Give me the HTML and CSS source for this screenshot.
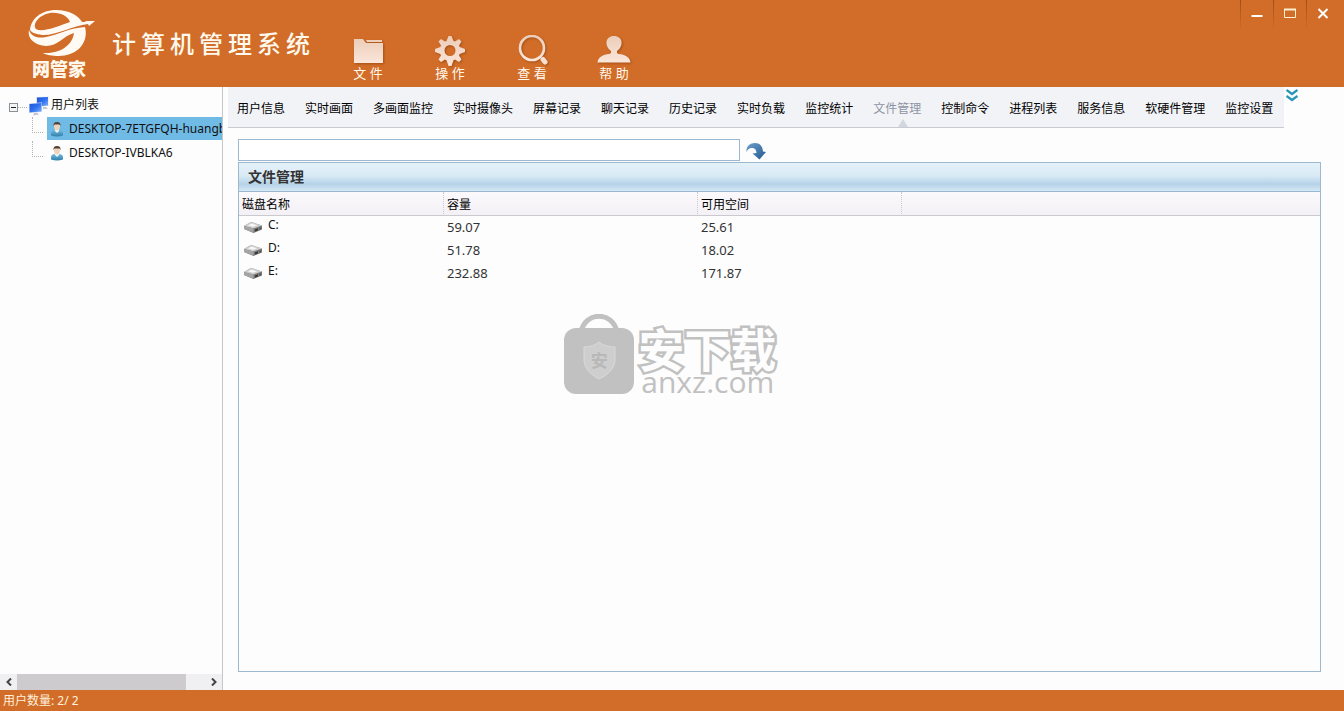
FILE: index.html
```html
<!DOCTYPE html>
<html lang="zh-CN">
<head>
<meta charset="utf-8">
<title>计算机管理系统</title>
<link rel="stylesheet" href="styles.css">
</head>
<body>
<svg class="defs" aria-hidden="true">
  <defs>
    <linearGradient id="pale" x1="0" y1="0" x2="0" y2="1"><stop offset="0" stop-color="#eccdb9"/><stop offset="1" stop-color="#fbe6da"/></linearGradient>
    <linearGradient id="screen" x1="0" y1="0" x2="1" y2="1"><stop offset="0" stop-color="#1c55d8"/><stop offset="0.5" stop-color="#2f6ff0"/><stop offset="1" stop-color="#7db4fa"/></linearGradient>
    <linearGradient id="shirt" x1="0" y1="0" x2="0" y2="1"><stop offset="0" stop-color="#77bcdc"/><stop offset="1" stop-color="#2d7fac"/></linearGradient>
    <linearGradient id="swoop" x1="0" y1="0" x2="1" y2="1"><stop offset="0" stop-color="#6da0cd"/><stop offset="1" stop-color="#24588f"/></linearGradient>
    <symbol id="person" viewBox="0 0 14 16">
      <path d="M1 14.500V12.500Q1 9 5 9H9Q13 9 13 12.500V14.500Q7 16.500 1 14.500Z" fill="url(#shirt)"/>
      <path d="M5 8H9V10L7 12L5 10Z" fill="#eef4f7"/>
      <ellipse cx="7" cy="5.500" rx="3" ry="3.800" fill="#f0d3bd"/>
      <path d="M3.500 5Q3 1 7 1T10.500 5L9.500 3.500H4.500Z" fill="#544135"/>
    </symbol>
    <symbol id="drive" viewBox="0 0 20 14">
      <path d="M1 6L8 2L19 5.500V9.500L10.500 13L1 9Z" fill="#777"/>
      <path d="M1 6L8 2L19 5.500L10.500 8.500Z" fill="#cfcfcf"/>
      <path d="M5 5.500L8.500 3.500L14 5.300L10 6.800Z" fill="#f7f7f7"/>
      <path d="M1 6L10.500 8.500V12.500L1 9Z" fill="#a5a5a5"/>
      <path d="M12 9.500L17.500 7.500V9.300L12 11.500Z" fill="#333"/>
      <path d="M15 8.700L16.500 8.200V9.200L15 9.700Z" fill="#cfcfcf"/>
    </symbol>
  </defs>
</svg>
<div class="app">
  <header class="topbar">
    <div class="logo">
      <svg class="logo-mark" viewBox="0 0 68 48" aria-hidden="true">
        <g fill="#fffaf3">
          <path fill-rule="evenodd" d="M2 21C3 10 13 1 28 1C41 1 50 6 54 13L58 13L57 12L67 12L61 17L60 15C44 17 27 27 14 26C8 25 4 24 2 21ZM8 20C14 24 31 17 42 13C40 7 32 3 22 4C11 6 4 15 8 20Z"/>
          <path d="M1 21C3 27 9 30 18 28C30 26 40 19 57 18C61 33 50 47 31 47C24 47 18 46 15 44C30 45 44 38 46 24C35 27 30 37 18 37C7 36 -1 30 1 21Z"/>
        </g>
      </svg>
      <span class="logo-name">网管家</span>
    </div>
    <h1 class="title">计算机管理系统</h1>
    <nav class="menu" aria-label="主菜单">
      <button class="menu-item" type="button">
        <svg class="menu-icon" viewBox="0 0 34 32" aria-hidden="true"><path fill="url(#pale)" d="M3 4H12L15 8H32V28H3ZM15 5H31V7H16Z"/></svg>
        <span>文 件</span>
      </button>
      <button class="menu-item" type="button">
        <svg class="menu-icon" viewBox="0 0 34 32" aria-hidden="true"><path fill="url(#pale)" fill-rule="evenodd" d="M13.500 6L15.500 1H18.500L20.500 6L22 6.600L26 4L28.500 6.500L26 10.500L26.700 12L32 14V17L26.700 19L26 20.500L28.500 24.500L26 27L22 24.500L20.500 25.200L18.500 31H15.500L13.500 25.200L12 24.500L8 27L5.500 24.500L8 20.500L7.300 19L2 17V14L7.300 12L8 10.500L5.500 6.500L8 4L12 6.600ZM17 10A5.500 5.500 0 1 0 17 21A5.500 5.500 0 1 0 17 10Z"/></svg>
        <span>操 作</span>
      </button>
      <button class="menu-item" type="button">
        <svg class="menu-icon" viewBox="0 0 34 32" aria-hidden="true"><circle cx="17" cy="13" r="12" fill="none" stroke="url(#pale)" stroke-width="2.600"/><path d="M28 24.500L30 27" stroke="#f8dfcf" stroke-width="5" stroke-linecap="round"/></svg>
        <span>查 看</span>
      </button>
      <button class="menu-item" type="button">
        <svg class="menu-icon" viewBox="0 0 34 32" aria-hidden="true"><path fill="url(#pale)" d="M0.500 27.500C1 22 6 19.500 12 19Q14.500 18.500 14 16C7 11 8 1 17 1S27 11 20 16Q19.500 18.500 22 19C28 19.500 33 22 33.500 27.500Z"/></svg>
        <span>帮 助</span>
      </button>
    </nav>
    <div class="window-controls">
      <button type="button" aria-label="最小化"><svg viewBox="0 0 12 12"><path d="M0.500 9H11.500" stroke="#fff" stroke-width="2"/></svg></button>
      <button type="button" aria-label="最大化"><svg viewBox="0 0 12 12"><path d="M0.500 2.500V10.500H11.500V2" fill="none" stroke="#fff2cf"/><path d="M0 2.500H12" stroke="#fff2cf" stroke-width="2"/></svg></button>
      <button type="button" aria-label="关闭"><svg viewBox="0 0 12 12"><path d="M1.500 2L10.500 11M10.500 2L1.500 11" stroke="#fff" stroke-width="2"/></svg></button>
    </div>
  </header>

  <aside class="sidebar">
    <div class="tree">
      <div class="tree-root">
        <button class="toggle" type="button" aria-label="折叠"><svg viewBox="0 0 7 7"><path d="M1 3.500H6" stroke="#222"/></svg></button>
        <span class="root-line"></span>
        <svg class="root-icon" viewBox="0 0 20 20" aria-hidden="true">
          <path d="M7 1L19.500 0.500V10L7 11Z" fill="#dfe6f0"/><path d="M8 1.500L19 1V9.500L8 10.500Z" fill="url(#screen)"/>
          <path d="M0 7.500L13 6.500V16L0 17Z" fill="#e4e9f2"/><path d="M0.500 8L12.500 7V15.500L0.500 16.500Z" fill="url(#screen)"/>
          <path d="M5 17L8 16.500L10 18.500L4 19.500ZM14 11H17L19 13H14Z" fill="#c3c7cf"/>
        </svg>
        <span>用户列表</span>
      </div>
      <ul class="tree-list">
        <li><button class="user selected" type="button"><svg class="user-icon" aria-hidden="true"><use href="#person"/></svg><span>DESKTOP-7ETGFQH-huangb</span></button></li>
        <li><button class="user" type="button"><svg class="user-icon" aria-hidden="true"><use href="#person"/></svg><span>DESKTOP-IVBLKA6</span></button></li>
      </ul>
    </div>
    <div class="scrollbar">
      <button type="button" aria-label="向左滚动"><svg viewBox="0 0 8 8"><path d="M6 0.500L2.500 4L6 7.500" fill="none" stroke="#444" stroke-width="2"/></svg></button>
      <div class="track"><div class="thumb"></div></div>
      <button type="button" aria-label="向右滚动"><svg viewBox="0 0 8 8"><path d="M2 0.500L5.500 4L2 7.500" fill="none" stroke="#444" stroke-width="2"/></svg></button>
    </div>
  </aside>

  <main class="content">
    <div class="tab-row">
      <nav class="tabs" aria-label="功能">
        <button type="button">用户信息</button>
        <button type="button">实时画面</button>
        <button type="button">多画面监控</button>
        <button type="button">实时摄像头</button>
        <button type="button">屏幕记录</button>
        <button type="button">聊天记录</button>
        <button type="button">历史记录</button>
        <button type="button">实时负载</button>
        <button type="button">监控统计</button>
        <button type="button" class="active">文件管理</button>
        <button type="button">控制命令</button>
        <button type="button">进程列表</button>
        <button type="button">服务信息</button>
        <button type="button">软硬件管理</button>
        <button type="button">监控设置</button>
      </nav>
      <button class="more" type="button" aria-label="更多"><svg viewBox="0 0 12 13"><path d="M0.500 1L6 5L11.500 1M0.500 7L6 11L11.500 7" fill="none" stroke="#2a97b8" stroke-width="2.400"/></svg></button>
    </div>

    <div class="work">
      <form class="path-row">
        <input class="path" type="text" aria-label="路径">
        <button class="go" type="button" aria-label="转到"><svg viewBox="0 0 20 18"><path d="M0.500 10C0 4 4 1 9 1C14 1 16.500 4 17 9.500L20 10L13.500 17.500L6.500 11.500L10.500 11C10.500 7 8 5.500 5 6Q2 6.500 0.500 10Z" fill="url(#swoop)"/></svg></button>
      </form>

      <section class="panel">
        <h2 class="panel-title">文件管理</h2>
        <table class="disks">
          <thead>
            <tr><th class="col-name">磁盘名称</th><th class="col-size">容量</th><th class="col-free">可用空间</th><th class="col-rest"></th></tr>
          </thead>
          <tbody>
            <tr><td><span class="disk"><svg aria-hidden="true"><use href="#drive"/></svg><span class="letter">C:</span></span></td><td>59.07</td><td>25.61</td><td></td></tr>
            <tr><td><span class="disk"><svg aria-hidden="true"><use href="#drive"/></svg><span class="letter">D:</span></span></td><td>51.78</td><td>18.02</td><td></td></tr>
            <tr><td><span class="disk"><svg aria-hidden="true"><use href="#drive"/></svg><span class="letter">E:</span></span></td><td>232.88</td><td>171.87</td><td></td></tr>
          </tbody>
        </table>
        <div class="watermark">
          <div class="bag">
            <svg viewBox="0 0 72 82" aria-hidden="true">
              <path d="M18 18C22 -3 50 -3 54 18" fill="none" stroke="#c1c1c1" stroke-width="5"/>
              <rect x="1" y="14" width="70" height="66" rx="12" fill="#c1c1c1"/>
              <path d="M21 33Q30 33 36 28Q42 33 52 33V47Q51 58 36 65Q22 58 21 47Z" fill="#cecece" stroke="#d9d9d9"/>
            </svg>
            <span class="bag-text">安</span>
          </div>
          <div class="mark-words"><span class="mark-name">安下载</span><span class="mark-site">anxz.com</span></div>
        </div>
      </section>
    </div>
  </main>

  <footer class="status">用户数量: 2/ 2</footer>
</div>
</body>
</html>
```

FILE: styles.css
```css
* { box-sizing: border-box; }

body {
  margin: 0;
  color: #111;
  font: 12px/16px "Noto Sans", "Noto Sans CJK SC", sans-serif;
}

button {
  margin: 0;
  padding: 0;
  border: 0;
  background: none;
  color: inherit;
  font: inherit;
}

svg { display: block; }
.defs { position: absolute; width: 0; height: 0; }

.app {
  display: grid;
  grid-template-columns: 223px minmax(0, 1fr);
  grid-template-rows: 87px minmax(0, 1fr) 21px;
  height: 100vh;
  background: #fdfdfd;
}

/* top bar */
.topbar {
  grid-column: 1 / -1;
  display: flex;
  align-items: flex-start;
  background: #d16d28;
  color: #fff8ec;
}

.logo {
  display: flex;
  flex-direction: column;
  align-items: flex-start;
  width: 68px;
  margin: 9px 0 0 28px;
}
.logo-mark { width: 68px; height: 48px; }
.logo-name {
  padding-left: 4px;
  font-size: 18px;
  font-weight: 900;
  line-height: 24px;
  white-space: nowrap;
}

.title {
  width: 215px;
  margin: 26px 0 0 16px;
  font-size: 24px;
  font-weight: 500;
  line-height: 36px;
  letter-spacing: 5px;
  white-space: nowrap;
}

.menu { display: flex; padding-top: 35px; }
.menu-item {
  display: flex;
  flex-direction: column;
  align-items: center;
  width: 82px;
  line-height: 12px;
  font-size: 13px;
  white-space: pre;
}
.menu-icon {
  width: 34px;
  height: 32px;
  filter: drop-shadow(1px 1px 1px #a34f17);
}

.window-controls { display: flex; margin-left: auto; }
.window-controls button {
  display: flex;
  justify-content: center;
  width: 33px;
  height: 30px;
  padding-top: 7px;
  border-left: 1px solid #a9551c;
  border-image: linear-gradient(#9d4e19, #d16d28) 1;
  border-width: 0 0 0 1px;
}
.window-controls button:last-child { width: 38px; padding-right: 6px; }
.window-controls svg { width: 12px; height: 12px; }

/* user tree */
.sidebar {
  display: flex;
  flex-direction: column;
  min-width: 0;
  border-right: 1px solid #c6c6ca;
}
.tree { flex: 1; overflow: hidden; padding-top: 7px; }
.tree-root { display: flex; align-items: center; height: 22px; padding-left: 9px; }
.toggle {
  width: 9px;
  height: 9px;
  margin-top: 4px;
  border: 1px solid #8b8f98;
  background: #f4f4f4;
}
.root-line { width: 9px; margin: 4px 2px 0 0; border-top: 1px dotted #b4b4b4; }
.root-icon { width: 20px; height: 20px; margin: 2px 2px 0 0; }
.tree-list {
  margin: 0 0 0 32px;
  padding: 0;
  list-style: none;
}
.tree-list li {
  display: flex;
  height: 24px;
  padding-top: 1px;
}
.tree-list li::before {
  content: "";
  flex: none;
  width: 10px;
  height: 15px;
  margin-right: 4px;
  border-left: 1px dotted #b4b4b4;
  border-bottom: 1px dotted #b4b4b4;
}
.user {
  display: flex;
  flex: 1;
  align-items: center;
  gap: 5px;
  height: 23px;
  padding-left: 3px;
  white-space: nowrap;
  overflow: hidden;
}
.selected { background: #70bae6; }
.user-icon { flex: none; width: 14px; height: 16px; }

.scrollbar {
  display: flex;
  height: 16px;
  background: #f0eff1;
}
.scrollbar button { display: grid; place-items: center; width: 17px; }
.scrollbar svg { width: 8px; height: 8px; }
.track { flex: 1; }
.thumb { width: 90%; height: 100%; background: #cdcbce; }

/* tabs */
.content { display: flex; flex-direction: column; min-width: 0; padding-left: 5px; }
.tab-row { display: flex; align-items: flex-start; }
.tabs {
  display: flex;
  height: 41px;
  border-bottom: 1px solid #c8ccd2;
  background: #f2f3f7;
}
.tabs button {
  position: relative;
  padding: 4px 11px 0 9px;
  color: #000;
  white-space: nowrap;
}
.tabs .active { color: #8d93a3; }
.tabs .active::after {
  content: "";
  position: absolute;
  bottom: 0;
  left: 50%;
  border: solid transparent;
  border-width: 0 5px 8px;
  border-bottom-color: #d0d7df;
}
.more { margin: 2px 0 0 2px; }
.more svg { width: 12px; height: 13px; }

/* file manager */
.work {
  display: flex;
  flex: 1;
  flex-direction: column;
  min-height: 0;
  padding: 11px 23px 18px 10px;
}
.path-row { display: flex; align-items: center; gap: 6px; margin-bottom: 1px; }
.path {
  width: 502px;
  height: 22px;
  padding: 0 4px;
  border: 1px solid #9db9d0;
  background: #fff;
  font: inherit;
}
.go { padding-top: 2px; }
.go svg { width: 20px; height: 18px; }

.panel {
  position: relative;
  flex: 1;
  border: 1px solid #9db9d0;
}
.panel-title {
  margin: 0;
  padding-left: 9px;
  border-bottom: 1px solid #9bb8d3;
  background: linear-gradient(#e4f1f9, #d9eaf5 45%, #b5d2e8 75%, #d5e9f5);
  color: #333;
  font-size: 14px;
  font-weight: 700;
  line-height: 28px;
}
.disks {
  width: 100%;
  border-collapse: separate;
  border-spacing: 0;
  table-layout: fixed;
}
.disks th {
  height: 24px;
  padding: 2px 3px 0;
  border-right: 1px dotted #c9c9cf;
  border-bottom: 1px solid #c9c9cf;
  background: linear-gradient(#fbf9fc, #f3f1f5);
  color: #000;
  font-weight: 400;
  text-align: left;
}
.disks .col-name { width: 205px; }
.disks .col-size { width: 254px; }
.disks .col-free { width: 204px; }
.disks .col-rest { border-right: 0; }
.disks td {
  height: 23px;
  padding: 0 3px 1px;
  color: #333;
  font-size: 13px;
}
.disk { display: flex; align-items: center; gap: 5px; padding-left: 1px; }
.disk svg { width: 20px; height: 14px; }
.letter { padding-bottom: 4px; color: #111; font-size: 12px; }

/* watermark laid over the panel */
.watermark {
  position: absolute;
  top: 151px;
  left: 30%;
  display: flex;
  gap: 3px;
  color: #c1c1c1;
  pointer-events: none;
}
.bag { position: relative; width: 72px; }
.bag svg { width: 72px; height: 82px; }
.bag-text {
  position: absolute;
  inset: 36px 0 auto;
  color: #b8b8b8;
  font-size: 17px;
  font-weight: 700;
  line-height: 22px;
  text-align: center;
}
.mark-words { display: flex; flex-direction: column; padding-top: 11px; }
.mark-name {
  color: #fdfdfd;
  font-size: 46px;
  font-weight: 700;
  line-height: 48px;
  -webkit-text-stroke: 5px #c1c1c1;
  paint-order: stroke;
  stroke-linejoin: round;
}
.mark-site {
  padding-left: 3px;
  font-family: "Open Sans", "Noto Sans", sans-serif;
  font-size: 30px;
  line-height: 18px;
}

.status {
  grid-column: 1 / -1;
  padding-left: 3px;
  background: #d16d28;
  color: #fff0dc;
  line-height: 21px;
}
```
